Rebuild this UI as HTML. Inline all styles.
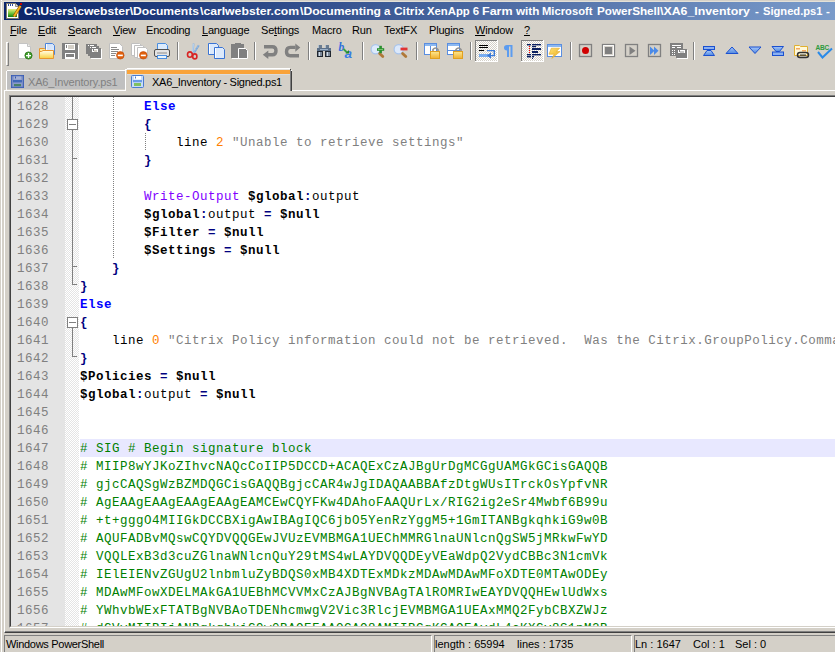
<!DOCTYPE html>
<html><head><meta charset="utf-8"><style>
*{margin:0;padding:0;box-sizing:border-box}
html,body{width:835px;height:652px;overflow:hidden;background:#d4d0c8;position:relative;font-family:"Liberation Sans",sans-serif}
.a{position:absolute}
#title{position:absolute;left:4px;top:2px;width:831px;height:18px;background:linear-gradient(to right,#0a246a 0px,#a6caf0 1157px)}
.tt{position:absolute;top:5px;font:bold 11.5px "Liberation Sans",sans-serif;color:#fff;white-space:pre;transform-origin:0 0}
.mi{position:absolute;top:24px;font:11px "Liberation Sans",sans-serif;color:#000;white-space:pre;letter-spacing:-0.2px}
.mi u{text-decoration:underline;text-underline-offset:1px}
.sep{position:absolute;top:42px;width:2px;height:19px;border-left:1px solid #808080;border-right:1px solid #fff}
.ic{position:absolute;top:43px;width:16px;height:16px}
.tl{position:absolute;left:80px;width:755px;height:18px;padding-left:0px;padding-top:1px;letter-spacing:0.5px;font:12.5px "Liberation Mono",monospace;line-height:18px;white-space:pre;color:#000;overflow:hidden}
.tl.cur{background:#e8e8ff}
.ln{position:absolute;left:11px;width:38px;height:18px;padding-top:1px;text-align:right;letter-spacing:0.5px;font:12.5px "Liberation Mono",monospace;line-height:18px;color:#808080}
.kw{color:#0000ff;font-weight:bold}
.op{color:#000080;font-weight:bold}
.var{color:#000;font-weight:bold}
.cmd{color:#8000ff}
.num{color:#ff8000}
.str{color:#808080}
.cm{color:#008000}
.id{color:#000}
.st{position:absolute;top:638px;font:11px "Liberation Sans",sans-serif;white-space:pre;color:#000;letter-spacing:0px}
</style></head><body>
<!-- window frame -->
<div class="a" style="left:1px;top:0;width:1px;height:652px;background:#fff"></div>
<div class="a" style="left:1px;top:1px;width:834px;height:1px;background:#e4e1d8"></div>

<div id="title"></div>
<div class="tt" style="left:23.6px;transform:scaleX(1.053)">C:\Users\cwebster\Documents</div>
<div class="tt" style="left:199.6px;transform:scaleX(1.062)">\carlwebster.com</div>
<div class="tt" style="left:299.6px;transform:scaleX(1.057)">\Documenting</div>
<div class="tt" style="left:384.0px;transform:scaleX(1.0)">a</div>
<div class="tt" style="left:393.7px;transform:scaleX(1.034)">Citrix</div>
<div class="tt" style="left:426.6px;transform:scaleX(0.984)">XenApp</div>
<div class="tt" style="left:472.7px;transform:scaleX(1.0)">6</div>
<div class="tt" style="left:481.71px;transform:scaleX(1.089)">Farm</div>
<div class="tt" style="left:516.4px;transform:scaleX(1.017)">with</div>
<div class="tt" style="left:541.83px;transform:scaleX(0.975)">Microsoft</div>
<div class="tt" style="left:596.78px;transform:scaleX(1.018)">PowerShell</div>
<div class="tt" style="left:659.5px;transform:scaleX(1.073)">\XA6_Inventory</div>
<div class="tt" style="left:755.1px;transform:scaleX(1.0)">-</div>
<div class="tt" style="left:762.7px;transform:scaleX(0.97)">Signed.ps1</div>
<div class="tt" style="left:826.0px;transform:scaleX(1.0)">-</div>
<div class="mi" style="left:10px"><u>F</u>ile</div>
<div class="mi" style="left:38px"><u>E</u>dit</div>
<div class="mi" style="left:68px"><u>S</u>earch</div>
<div class="mi" style="left:113px"><u>V</u>iew</div>
<div class="mi" style="left:146px">Encoding</div>
<div class="mi" style="left:202px"><u>L</u>anguage</div>
<div class="mi" style="left:261px">Se<u>t</u>tings</div>
<div class="mi" style="left:312px">Macro</div>
<div class="mi" style="left:352px">Run</div>
<div class="mi" style="left:384px">TextFX</div>
<div class="mi" style="left:429px">Plugins</div>
<div class="mi" style="left:475px"><u>W</u>indow</div>
<div class="mi" style="left:524px"><u>?</u></div>
<!-- toolbar grip -->
<div class="a" style="left:6px;top:42px;width:3px;height:24px;border-left:1px solid #fff;border-top:1px solid #fff;border-right:1px solid #808080;border-bottom:1px solid #808080"></div>
<svg class="a" style="left:0;top:0" width="835" height="95" viewBox="0 0 835 95">
<defs>
<linearGradient id="gFold" x1="0" y1="0" x2="0" y2="1"><stop offset="0" stop-color="#fff6c0"/><stop offset="1" stop-color="#f6cf3c"/></linearGradient>
<linearGradient id="gBlueDoc" x1="0" y1="0" x2="1" y2="1"><stop offset="0" stop-color="#c8dcf8"/><stop offset="1" stop-color="#e8f0fc"/></linearGradient>
<linearGradient id="gLock" x1="0" y1="0" x2="0" y2="1"><stop offset="0" stop-color="#fde890"/><stop offset="1" stop-color="#f0b030"/></linearGradient>
<linearGradient id="gTri" x1="0" y1="0" x2="0" y2="1"><stop offset="0" stop-color="#a8c8f8"/><stop offset="1" stop-color="#5088e0"/></linearGradient>
<pattern id="chk" width="2" height="2" patternUnits="userSpaceOnUse"><rect width="2" height="2" fill="#fff"/><rect width="1" height="1" fill="#d4d0c8"/><rect x="1" y="1" width="1" height="1" fill="#d4d0c8"/></pattern>
</defs>
<!-- 1 New -->
<path d="M18.5 43.5H27.5L30.5 46.5V58.5H18.5Z" fill="#fff" stroke="#c4c4c4"/>
<path d="M27.5 43.5V46.5H30.5" fill="#f0f0f0" stroke="#c4c4c4"/>
<circle cx="28.5" cy="55.5" r="3.6" fill="#3c9c28" stroke="#2a7418" stroke-width="0.8"/>
<rect x="26" y="55" width="5" height="1.3" fill="#fff"/><rect x="27.9" y="53" width="1.3" height="5" fill="#fff"/>
<!-- 2 Open -->
<linearGradient id="gFold2" x1="0" y1="0" x2="0" y2="1"><stop offset="0" stop-color="#fffbe8"/><stop offset="0.35" stop-color="#fff0b0"/><stop offset="1" stop-color="#f8d040"/></linearGradient>
<path d="M45.5 43.5H52.5L54.5 45.5V54.5H45.5Z" fill="url(#gBlueDoc)" stroke="#4a84dc"/>
<rect x="46" y="44" width="1" height="10" fill="#fff"/>
<path d="M39.5 52V48.5H44.5L45.5 49.5V52" fill="#fde79a" stroke="#e8962e"/>
<path d="M39.5 51.5H41.5L43 50.5H53.5V58.5H39.5Z" fill="url(#gFold2)" stroke="#e8962e"/>
<!-- 3 Save -->
<rect x="62" y="43" width="16" height="16" fill="#808080"/>
<rect x="65" y="44" width="10" height="6" fill="#fff"/>
<rect x="68" y="45" width="6" height="4" fill="#d4d0c8"/>
<rect x="66" y="45" width="1" height="3" fill="#808080"/>
<rect x="65" y="53" width="10" height="6" fill="#fff"/>
<rect x="66" y="54" width="8" height="3" fill="#808080"/>
<rect x="78" y="45" width="1" height="14" fill="#fff"/>
<!-- 4 Save all -->
<rect x="86" y="44" width="11" height="10" fill="#808080"/>
<rect x="88" y="46" width="11" height="10" fill="#808080" stroke="#fff" stroke-width="0"/>
<rect x="90" y="48" width="11" height="10" fill="#808080"/>
<rect x="88" y="45" width="1" height="1" fill="#fff"/><rect x="90" y="45" width="4" height="1" fill="#fff"/>
<rect x="90" y="47" width="1" height="1" fill="#fff"/><rect x="92" y="47" width="4" height="1" fill="#fff"/>
<rect x="92" y="49" width="6" height="3" fill="#fff"/><rect x="94" y="50" width="3" height="2" fill="#d4d0c8"/><rect x="93" y="49" width="1" height="2" fill="#808080"/>
<rect x="101" y="49" width="1" height="10" fill="#fff"/><rect x="91" y="58" width="11" height="1" fill="#fff"/>
<!-- 5 Close -->
<path d="M109.5 43.5H119.5L122.5 46.5V58.5H109.5Z" fill="#fff" stroke="#c0c0c0"/>
<g fill="#8a8a8a"><rect x="111" y="47" width="6" height="1"/><rect x="111" y="49" width="8" height="1"/><rect x="111" y="51" width="7" height="1"/><rect x="111" y="53" width="5" height="1"/><rect x="111" y="55" width="4" height="1"/></g>
<circle cx="120.3" cy="55.3" r="3.8" fill="#e0600c" stroke="#c04808" stroke-width="0.6"/>
<rect x="117.8" y="54.6" width="5" height="1.6" fill="#fff"/>
<!-- 6 Close all -->
<path d="M131.5 43.5H139.5L141.5 45.5V55.5H131.5Z" fill="#fff" stroke="#c0c0c0"/>
<path d="M134.5 45.5H142.5L144.5 47.5V57.5H134.5Z" fill="#fff" stroke="#c0c0c0"/>
<path d="M137.5 47.5H145.5L147.5 49.5V58.5H137.5Z" fill="#fff" stroke="#c0c0c0"/>
<circle cx="143.3" cy="55.3" r="3.8" fill="#e0600c" stroke="#c04808" stroke-width="0.6"/>
<rect x="140.8" y="54.6" width="5" height="1.6" fill="#fff"/>
<!-- 7 Print -->
<path d="M157.5 43.5H165.5L167.5 45.5V50.5H157.5Z" fill="#dcebfc" stroke="#4a8ee0"/>
<rect x="154.5" y="49.5" width="15" height="7" rx="1.5" fill="#e4e4e4" stroke="#505050"/>
<rect x="157" y="52" width="10" height="2" fill="#b8b8b8"/>
<rect x="157.5" y="55.5" width="9" height="3" fill="#e8f4fc" stroke="#4a8ee0"/>
<!-- separators -->
<g fill="#808080"><rect x="177" y="42" width="1" height="18"/><rect x="254" y="42" width="1" height="18"/><rect x="308" y="42" width="1" height="18"/><rect x="362" y="42" width="1" height="18"/><rect x="416" y="42" width="1" height="18"/><rect x="470" y="42" width="1" height="18"/><rect x="570" y="42" width="1" height="18"/><rect x="693" y="42" width="1" height="18"/></g>
<g fill="#ffffff"><rect x="178" y="42" width="1" height="18"/><rect x="255" y="42" width="1" height="18"/><rect x="309" y="42" width="1" height="18"/><rect x="363" y="42" width="1" height="18"/><rect x="417" y="42" width="1" height="18"/><rect x="471" y="42" width="1" height="18"/><rect x="571" y="42" width="1" height="18"/><rect x="694" y="42" width="1" height="18"/></g>
<!-- 8 Cut -->
<path d="M193.6 43.5L192.6 54.5" stroke="#8cb4e0" stroke-width="1.8" fill="none"/>
<path d="M193.3 44L192.6 53" stroke="#e8f2fc" stroke-width="0.6" fill="none"/>
<path d="M198.8 45.3L194.2 52.5" stroke="#7aa6d8" stroke-width="2" fill="none"/>
<path d="M198.3 45.6L194.6 51.4" stroke="#e0ecfa" stroke-width="0.6" fill="none" stroke-dasharray="1 1"/>
<ellipse cx="189.9" cy="54.6" rx="2.4" ry="2.7" fill="none" stroke="#d82424" stroke-width="1.6"/>
<ellipse cx="194.8" cy="56.4" rx="2.1" ry="2.5" fill="none" stroke="#d82424" stroke-width="1.6"/>
<!-- 9 Copy -->
<path d="M208.5 43.5H216.5L218.5 45.5V54.5H208.5Z" fill="#dce9fb" stroke="#3a74d4"/>
<path d="M214.5 47.5H222.5L224.5 49.5V58.5H214.5Z" fill="#dce9fb" stroke="#3a74d4"/>
<rect x="215" y="48" width="1" height="10" fill="#fff"/><rect x="209" y="44" width="1" height="10" fill="#fff"/>
<!-- 10 Paste -->
<rect x="231" y="44" width="13" height="14" fill="#808080"/>
<rect x="235" y="43" width="6" height="2" fill="#808080"/>
<path d="M238.5 48.5H245.5L247.5 50.5V58.5H238.5Z" fill="#808080" stroke="#fff"/>
<rect x="232" y="58" width="7" height="1" fill="#fff"/>
<!-- 11 Undo -->
<path d="M264 46.8H272.3Q276 46.8 276 50.7Q276 54.8 272.3 54.8H267.5" fill="none" stroke="#808080" stroke-width="3.4"/>
<path d="M262.8 54.8L268.3 50.6V59Z" fill="#808080"/>
<!-- 12 Redo -->
<path d="M299 55.8H290.2Q286.5 55.8 286.5 51.8Q286.5 47.4 290.2 47.4H295.5" fill="none" stroke="#808080" stroke-width="3.4"/>
<path d="M300.3 47.6L295.3 43.6V51.8Z" fill="#808080"/>
<!-- 13 Find -->
<!-- 13 Find -->
<rect x="318" y="45" width="4" height="4" fill="#6a7c90"/><rect x="325" y="45" width="4" height="4" fill="#6a7c90"/>
<rect x="318" y="45" width="1" height="4" fill="#b0c0d0"/><rect x="325" y="45" width="1" height="4" fill="#b0c0d0"/>
<rect x="317" y="48" width="14" height="3" fill="#5c7088"/>
<rect x="320" y="49" width="8" height="1" fill="#9ab0c8"/>
<rect x="317" y="51" width="6" height="6" fill="#20262e"/><rect x="325" y="51" width="6" height="6" fill="#20262e"/>
<rect x="318" y="52" width="4" height="4" fill="#7c8898"/><rect x="326" y="52" width="4" height="4" fill="#7c8898"/>
<rect x="319" y="52" width="1" height="4" fill="#d0dce8"/><rect x="327" y="52" width="1" height="4" fill="#d0dce8"/>
<!-- 14 Replace -->
<text x="338.5" y="50.5" font-family="Liberation Serif" font-style="italic" font-weight="bold" font-size="11.5" fill="#2f6fdc">b</text>
<text x="344.5" y="58" font-family="Liberation Sans" font-style="italic" font-weight="bold" font-size="13.5" fill="#3a7ce6">a</text>
<path d="M343.5 49L347 52.5" stroke="#3aa040" stroke-width="1.8" fill="none"/>
<path d="M345.5 53.5H349V50Z" fill="#238a2a"/>
<!-- 15 Zoom in -->
<circle cx="375.7" cy="49.3" r="4.6" fill="#dce9fb" stroke="#a8c4ec" stroke-width="1.2"/>
<path d="M379.6 53.4L382.8 56.6" stroke="#b07838" stroke-width="2.8" stroke-linecap="round"/>
<rect x="377" y="48.2" width="7.2" height="2.6" fill="#2a9030"/><rect x="379.3" y="45.8" width="2.6" height="7.4" fill="#2a9030"/>
<rect x="378" y="49.2" width="5" height="0.8" fill="#8ad080"/>
<!-- 16 Zoom out -->
<circle cx="398.7" cy="49.3" r="4.6" fill="#dce9fb" stroke="#a8c4ec" stroke-width="1.2"/>
<path d="M402.6 53.4L405.8 56.6" stroke="#b07838" stroke-width="2.8" stroke-linecap="round"/>
<rect x="400.5" y="47.6" width="7" height="2.8" fill="#e03434"/>
<!-- 17 Sync V -->
<rect x="424.5" y="43.5" width="12" height="11" fill="#fff" stroke="#5a8ee0"/>
<rect x="425" y="44" width="11" height="2" fill="#8cb8f0"/><rect x="430" y="46" width="1" height="9" fill="#5a8ee0"/>
<path d="M433 51V49.5Q435.5 46.5 438 49.5V51" fill="none" stroke="#909090" stroke-width="1.6"/>
<rect x="430.5" y="51.5" width="9" height="7" fill="url(#gLock)" stroke="#e0a020"/>
<!-- 18 Sync H -->
<rect x="447.5" y="43.5" width="12" height="11" fill="#fff" stroke="#5a8ee0"/>
<rect x="448" y="44" width="11" height="2" fill="#8cb8f0"/><rect x="448" y="50" width="11" height="1" fill="#5a8ee0"/>
<path d="M456 51V49.5Q458.5 46.5 461 49.5V51" fill="none" stroke="#909090" stroke-width="1.6"/>
<rect x="453.5" y="51.5" width="9" height="7" fill="url(#gLock)" stroke="#e0a020"/>
<!-- 19 Wrap pressed -->
<rect x="475" y="40" width="23" height="22" fill="url(#chk)"/>
<rect x="475" y="40" width="22" height="1" fill="#808080"/><rect x="475" y="40" width="1" height="22" fill="#808080"/>
<rect x="497" y="40" width="1" height="22" fill="#fff"/><rect x="475" y="61" width="23" height="1" fill="#fff"/>
<rect x="479" y="45" width="9" height="1" fill="#000"/><rect x="479" y="47" width="9" height="1" fill="#000"/><rect x="479" y="50" width="5" height="1" fill="#000"/>
<rect x="479" y="54" width="10" height="3" fill="#78acf0"/>
<path d="M487 50.6H494.3V55.6H490" fill="none" stroke="#3a7ad8" stroke-width="1.4"/>
<path d="M491 52.5L487 55.6L491 58.7Z" fill="#3a7ad8"/>
<!-- 20 Pilcrow -->
<path d="M507 45H512.5V57H510.5V46.5H509V57H507V50.5Q504 50.5 504 47.8Q504 45 507 45Z" fill="#5c9cf0"/>
<!-- 21 Indent guide pressed -->
<rect x="521" y="40" width="23" height="22" fill="url(#chk)"/>
<rect x="521" y="40" width="22" height="1" fill="#808080"/><rect x="521" y="40" width="1" height="22" fill="#808080"/>
<rect x="543" y="40" width="1" height="22" fill="#fff"/><rect x="521" y="61" width="23" height="1" fill="#fff"/>
<g fill="#0a2060"><rect x="527" y="44" width="4" height="1.4"/><rect x="532" y="44" width="9" height="1.4"/><rect x="532" y="46" width="4" height="1.2"/><rect x="532" y="48" width="9" height="2"/><rect x="532" y="51" width="6" height="2"/><rect x="527" y="54" width="4" height="1.4"/><rect x="532" y="54" width="9" height="1.4"/><rect x="527" y="56" width="4" height="1.4"/><rect x="532" y="56" width="2" height="1.4"/><rect x="532" y="58" width="1" height="1"/></g>
<g fill="#ff0000"><rect x="529" y="46" width="1" height="1"/><rect x="529" y="48" width="1" height="1"/><rect x="529" y="50" width="1" height="1"/><rect x="529" y="52" width="1" height="1"/></g>
<!-- 22 Lightning -->
<linearGradient id="gBolt" x1="0" y1="0" x2="1" y2="1"><stop offset="0" stop-color="#fde070"/><stop offset="1" stop-color="#eeb020"/></linearGradient>
<rect x="547.5" y="44.5" width="14" height="12" fill="#fff" stroke="#5a8ee0"/>
<rect x="548" y="45" width="13" height="2" fill="#8cb8f0"/>
<path d="M551.3 48.2H559.6L556.4 51.6H560L551.8 58.4L554.2 54.2H549Z" fill="url(#gBolt)" stroke="#e0a828" stroke-width="0.6"/>
<!-- 23-26 Macro boxes -->
<rect x="579.5" y="44.5" width="12" height="12" fill="none" stroke="#808080" stroke-width="1.3"/>
<circle cx="585.5" cy="50.5" r="3.5" fill="#d00000"/>
<rect x="602.5" y="44.5" width="12" height="12" fill="none" stroke="#808080" stroke-width="1.3"/>
<rect x="603.6" y="45.6" width="9.8" height="9.8" fill="none" stroke="#fff" stroke-width="1"/>
<rect x="605" y="47" width="7" height="7" fill="#808080"/>
<rect x="625.5" y="44.5" width="12" height="12" fill="none" stroke="#808080" stroke-width="1.3"/>
<path d="M629.5 46.5V55L635.5 50.7Z" fill="#808080"/>
<rect x="648.5" y="44.5" width="12" height="12" fill="none" stroke="#808080" stroke-width="1.3"/>
<path d="M650 46.5V55L654.5 50.7Z M654 46.5V55L658.5 50.7Z" fill="#4a8ae8"/>
<!-- 27 Save macro -->
<rect x="670" y="43" width="13" height="13" fill="#808080"/>
<rect x="672" y="45" width="9" height="1" fill="#fff"/><rect x="672" y="47" width="3" height="1" fill="#fff"/><rect x="677" y="47" width="4" height="1" fill="#fff"/>
<g fill="#fff"><rect x="672" y="50" width="1" height="1"/><rect x="674" y="50" width="1" height="1"/><rect x="672" y="52" width="1" height="1"/><rect x="674" y="52" width="1" height="1"/><rect x="672" y="54" width="1" height="1"/><rect x="674" y="54" width="1" height="1"/></g>
<rect x="676" y="49" width="11" height="9" fill="#808080" stroke="#fff" stroke-width="0"/>
<rect x="678" y="50" width="7" height="3" fill="#fff"/><rect x="680" y="51" width="4" height="2" fill="#c8c8c8"/><rect x="679" y="50" width="1" height="2" fill="#808080"/>
<rect x="687" y="50" width="1" height="9" fill="#fff"/><rect x="677" y="58" width="11" height="1" fill="#fff"/>
<!-- 28 Hourglass1 -->
<rect x="703.5" y="46.5" width="11" height="3" fill="#8ab0f0" stroke="#1a50d0"/>
<path d="M707 50.5H711L714.5 55.5H703.5Z" fill="url(#gTri)" stroke="#1a50d0"/>
<!-- 29 Up -->
<path d="M732 47L738 53.5H726Z" fill="url(#gTri)" stroke="#1a50d0" stroke-width="1"/>
<!-- 30 Down -->
<path d="M755 53.5L761 47H749Z" fill="url(#gTri)" stroke="#1a50d0" stroke-width="1"/>
<!-- 31 Hourglass2 -->
<path d="M772 46.5H783.5L779.5 51.5H776Z" fill="url(#gTri)" stroke="#1a50d0"/>
<rect x="772.5" y="52" width="11" height="3.5" fill="#8ab0f0" stroke="#1a50d0"/>
<!-- 32 Folder chain -->
<path d="M794.5 45.5H799.5L800.5 46.5H807.5V55.5H794.5Z" fill="#fff8d8" stroke="#e0b030"/>
<rect x="796" y="48" width="4" height="1.5" fill="#f4a860"/><rect x="802" y="50" width="4" height="1.5" fill="#f4a860"/>
<rect x="797.5" y="52.5" width="11" height="5" rx="2.5" fill="none" stroke="#303030" stroke-width="1.5"/>
<rect x="800" y="54.5" width="6" height="1.2" fill="#303030"/>
<!-- 33 ABC check -->
<text x="815.5" y="49.8" font-family="Liberation Sans" font-weight="bold" font-size="6.5" fill="#2c9a3c" letter-spacing="-0.2">ABC</text>
<path d="M818 52L822.5 57.5L832 48.5" fill="none" stroke="#2a8ae8" stroke-width="2"/>
<!-- App icon -->
<linearGradient id="gApp" x1="0" y1="0" x2="0" y2="1"><stop offset="0" stop-color="#e8f080"/><stop offset="0.5" stop-color="#78c840"/><stop offset="1" stop-color="#108010"/></linearGradient>
<path d="M6.5 3.5H15.5L18.5 6.5V18.5H6.5Z" fill="#fff" stroke="#7c7868"/>
<path d="M15.5 3.5V6.5H18.5" fill="#d8d8d8" stroke="#7c7868" stroke-width="0.8"/>
<rect x="8" y="9" width="9" height="8" fill="url(#gApp)"/>
<g fill="#3050a0"><rect x="8" y="4" width="1" height="2"/><rect x="10" y="4" width="1" height="2"/><rect x="12" y="4" width="1" height="2"/></g>
<path d="M14 16.5L20.5 6" stroke="#905000" stroke-width="3"/>
<path d="M14 16.5L20.5 6" stroke="#f8b820" stroke-width="1.8"/>
<rect x="20" y="3" width="2" height="2" fill="#c00000"/>
</svg>

<!-- tab control -->
<div class="a" style="left:4px;top:90px;width:831px;height:543px;border-left:1px solid #fff;border-top:1px solid #fff;border-bottom:1px solid #404040"></div>
<div class="a" style="left:5px;top:631px;width:830px;height:1px;background:#808080"></div>
<!-- inactive tab -->
<div class="a" style="left:7px;top:71px;width:118px;height:18px;background:#c0c0c0"></div>
<div class="a" style="left:7px;top:70px;width:118px;height:1px;background:#fff"></div>
<div class="a" style="left:6px;top:71px;width:1px;height:19px;background:#fff"></div>
<div class="a" style="left:125px;top:71px;width:1px;height:19px;background:#fff"></div>
<div class="a" style="left:28px;top:76px;font:11px 'Liberation Sans',sans-serif;color:#808080;white-space:pre;letter-spacing:-0.15px">XA6_Inventory.ps1</div>
<!-- active tab -->
<div class="a" style="left:126px;top:69px;width:164px;height:22px;background:#d4d0c8"></div>
<div class="a" style="left:125px;top:69px;width:1px;height:22px;background:#fff"></div>
<div class="a" style="left:126px;top:69px;width:1px;height:1px;background:#fff"></div>
<div class="a" style="left:127px;top:68px;width:163px;height:1px;background:#fff"></div>
<div class="a" style="left:127px;top:69px;width:163px;height:1px;background:#e6e4e0"></div>
<div class="a" style="left:127px;top:70px;width:163px;height:4px;background:#f9a33a"></div>
<div class="a" style="left:127px;top:74px;width:163px;height:1px;background:#dcdcdc"></div>
<div class="a" style="left:290px;top:69px;width:1px;height:1px;background:#404040"></div>
<div class="a" style="left:291px;top:70px;width:1px;height:1px;background:#fff"></div>
<div class="a" style="left:290px;top:70px;width:1px;height:21px;background:#808080"></div>
<div class="a" style="left:291px;top:71px;width:1px;height:20px;background:#404040"></div>
<div class="a" style="left:152px;top:76px;font:11px 'Liberation Sans',sans-serif;color:#000;white-space:pre;letter-spacing:-0.27px">XA6_Inventory - Signed.ps1</div>
<svg class="a" style="left:0;top:0" width="200" height="95" viewBox="0 0 200 95">
<!-- Tab icons -->
<rect x="11.5" y="75.5" width="12" height="12" fill="#8a9ac8" stroke="#3458b0"/>
<rect x="12" y="76" width="11" height="11" fill="none" stroke="#5a78c0" stroke-width="0.8"/>
<rect x="14" y="76.5" width="7" height="3" fill="#a4b0d4"/><rect x="15" y="76.5" width="1" height="2" fill="#3458b0"/>
<rect x="13" y="80" width="9" height="2.4" fill="#4068b8"/>
<rect x="14" y="84" width="7" height="2.2" fill="#4a8068"/>
<rect x="131.5" y="75.5" width="12" height="12" rx="1" fill="#c8dcf8" stroke="#4a7cd0"/>
<rect x="134" y="76" width="7" height="3.5" fill="#fff"/><rect x="135" y="76.5" width="1" height="2" fill="#4a7cd0"/>
<rect x="133" y="80" width="9" height="2.2" fill="#6a9ce8"/>
<rect x="134" y="83" width="7" height="3" fill="#80c060"/>
</svg>

<!-- editor -->
<div class="a" style="left:9px;top:95px;width:826px;height:533px;border-left:1px solid #808080;border-top:1px solid #808080;border-bottom:1px solid #fff"></div>
<div class="a" style="left:10px;top:96px;width:825px;height:531px;border-left:1px solid #404040;border-top:1px solid #404040;border-bottom:1px solid #d4d0c8"></div>
<div class="a" style="left:11px;top:97px;width:824px;height:529px;background:#fff;overflow:hidden" id="ed">
</div>
<div class="a" style="left:11px;top:97px;width:54px;height:529px;background:#e4e4e4"></div>
<div class="a" style="left:65px;top:97px;width:14px;height:529px;background:repeating-conic-gradient(#e4e4e4 0 25%,#fff 0 50%) 0 0/2px 2px"></div>
<div style="position:absolute;left:0;top:0;width:835px;height:626px;overflow:hidden">
<div class="ln" style="top:97px">1628</div>
<div class="tl" style="top:97px">        <span class="kw">Else</span></div>
<div class="ln" style="top:115px">1629</div>
<div class="tl" style="top:115px">        <span class="op">{</span></div>
<div class="ln" style="top:133px">1630</div>
<div class="tl" style="top:133px">            <span class="id">line </span><span class="num">2</span><span class="id"> </span><span class="str">&quot;Unable to retrieve settings&quot;</span></div>
<div class="ln" style="top:151px">1631</div>
<div class="tl" style="top:151px">        <span class="op">}</span></div>
<div class="ln" style="top:169px">1632</div>
<div class="tl" style="top:169px"></div>
<div class="ln" style="top:187px">1633</div>
<div class="tl" style="top:187px">        <span class="cmd">Write-Output</span><span class="id"> </span><span class="var">$global</span><span class="op">:</span><span class="id">output</span></div>
<div class="ln" style="top:205px">1634</div>
<div class="tl" style="top:205px">        <span class="var">$global</span><span class="op">:</span><span class="id">output </span><span class="op">=</span><span class="id"> </span><span class="var">$null</span></div>
<div class="ln" style="top:223px">1635</div>
<div class="tl" style="top:223px">        <span class="var">$Filter</span><span class="id"> </span><span class="op">=</span><span class="id"> </span><span class="var">$null</span></div>
<div class="ln" style="top:241px">1636</div>
<div class="tl" style="top:241px">        <span class="var">$Settings</span><span class="id"> </span><span class="op">=</span><span class="id"> </span><span class="var">$null</span></div>
<div class="ln" style="top:259px">1637</div>
<div class="tl" style="top:259px">    <span class="op">}</span></div>
<div class="ln" style="top:277px">1638</div>
<div class="tl" style="top:277px"><span class="op">}</span></div>
<div class="ln" style="top:295px">1639</div>
<div class="tl" style="top:295px"><span class="kw">Else</span></div>
<div class="ln" style="top:313px">1640</div>
<div class="tl" style="top:313px"><span class="op">{</span></div>
<div class="ln" style="top:331px">1641</div>
<div class="tl" style="top:331px">    <span class="id">line </span><span class="num">0</span><span class="id"> </span><span class="str">&quot;Citrix Policy information could not be retrieved.  Was the Citrix.GroupPolicy.Commands snapin loaded?&quot;</span></div>
<div class="ln" style="top:349px">1642</div>
<div class="tl" style="top:349px"><span class="op">}</span></div>
<div class="ln" style="top:367px">1643</div>
<div class="tl" style="top:367px"><span class="var">$Policies</span><span class="id"> </span><span class="op">=</span><span class="id"> </span><span class="var">$null</span></div>
<div class="ln" style="top:385px">1644</div>
<div class="tl" style="top:385px"><span class="var">$global</span><span class="op">:</span><span class="id">output </span><span class="op">=</span><span class="id"> </span><span class="var">$null</span></div>
<div class="ln" style="top:403px">1645</div>
<div class="tl" style="top:403px"></div>
<div class="ln" style="top:421px">1646</div>
<div class="tl" style="top:421px"></div>
<div class="ln" style="top:439px">1647</div>
<div class="tl cur" style="top:439px"><span class="cm"># SIG # Begin signature block</span></div>
<div class="ln" style="top:457px">1648</div>
<div class="tl" style="top:457px"><span class="cm"># MIIP8wYJKoZIhvcNAQcCoIIP5DCCD+ACAQExCzAJBgUrDgMCGgUAMGkGCisGAQQB</span></div>
<div class="ln" style="top:475px">1649</div>
<div class="tl" style="top:475px"><span class="cm"># gjcCAQSgWzBZMDQGCisGAQQBgjcCAR4wJgIDAQAABBAfzDtgWUsITrckOsYpfvNR</span></div>
<div class="ln" style="top:493px">1650</div>
<div class="tl" style="top:493px"><span class="cm"># AgEAAgEAAgEAAgEAAgEAMCEwCQYFKw4DAhoFAAQUrLx/RIG2ig2eSr4Mwbf6B99u</span></div>
<div class="ln" style="top:511px">1651</div>
<div class="tl" style="top:511px"><span class="cm"># +t+gggO4MIIGkDCCBXigAwIBAgIQC6jbO5YenRzYggM5+1GmITANBgkqhkiG9w0B</span></div>
<div class="ln" style="top:529px">1652</div>
<div class="tl" style="top:529px"><span class="cm"># AQUFADBvMQswCQYDVQQGEwJVUzEVMBMGA1UEChMMRGlnaUNlcnQgSW5jMRkwFwYD</span></div>
<div class="ln" style="top:547px">1653</div>
<div class="tl" style="top:547px"><span class="cm"># VQQLExB3d3cuZGlnaWNlcnQuY29tMS4wLAYDVQQDEyVEaWdpQ2VydCBBc3N1cmVk</span></div>
<div class="ln" style="top:565px">1654</div>
<div class="tl" style="top:565px"><span class="cm"># IElEIENvZGUgU2lnbmluZyBDQS0xMB4XDTExMDkzMDAwMDAwMFoXDTE0MTAwODEy</span></div>
<div class="ln" style="top:583px">1655</div>
<div class="tl" style="top:583px"><span class="cm"># MDAwMFowXDELMAkGA1UEBhMCVVMxCzAJBgNVBAgTAlROMRIwEAYDVQQHEwlUdWxs</span></div>
<div class="ln" style="top:601px">1656</div>
<div class="tl" style="top:601px"><span class="cm"># YWhvbWExFTATBgNVBAoTDENhcmwgV2Vic3RlcjEVMBMGA1UEAxMMQ2FybCBXZWJz</span></div>
<div class="ln" style="top:619px">1657</div>
<div class="tl" style="top:619px"><span class="cm"># dGVyMIIBIjANBgkqhkiG9w0BAQEFAAOCAQ8AMIIBCgKCAQEAvdL4cKXGv8S1pM2B</span></div>
</div>
<!-- fold markers -->
<div class="a" style="left:72px;top:97px;width:1px;height:188px;background:#808080"></div>
<div class="a" style="left:67px;top:119px;width:11px;height:11px;border:1px solid #808080;background:#fff"></div>
<div class="a" style="left:69px;top:124px;width:7px;height:1px;background:#808080"></div>
<div class="a" style="left:72px;top:158px;width:5px;height:1px;background:#808080"></div>
<div class="a" style="left:72px;top:266px;width:5px;height:1px;background:#808080"></div>
<div class="a" style="left:72px;top:284px;width:5px;height:1px;background:#808080"></div>
<div class="a" style="left:67px;top:317px;width:11px;height:11px;border:1px solid #808080;background:#fff"></div>
<div class="a" style="left:69px;top:322px;width:7px;height:1px;background:#808080"></div>
<div class="a" style="left:72px;top:328px;width:1px;height:29px;background:#808080"></div>
<div class="a" style="left:72px;top:356px;width:5px;height:1px;background:#808080"></div>
<!-- indent guides -->
<div class="a" style="left:113px;top:97px;width:1px;height:162px;background-image:linear-gradient(#808080 50%,transparent 50%);background-size:1px 2px"></div>
<div class="a" style="left:145px;top:133px;width:1px;height:18px;background-image:linear-gradient(#808080 50%,transparent 50%);background-size:1px 2px"></div>
<div class="a" style="left:81px;top:349px;width:1px;height:0px"></div>
<!-- status bar -->
<div class="a" style="left:4px;top:635px;width:428px;height:17px;border-left:1px solid #808080;border-top:1px solid #808080;border-right:1px solid #fff"></div>
<div class="a" style="left:434px;top:635px;width:198px;height:17px;border-left:1px solid #808080;border-top:1px solid #808080;border-right:1px solid #fff"></div>
<div class="a" style="left:634px;top:635px;width:201px;height:17px;border-left:1px solid #808080;border-top:1px solid #808080"></div>
<div class="st" style="left:6px;letter-spacing:-0.3px">Windows PowerShell</div>
<div class="st" style="left:435px">length : 65994</div>
<div class="st" style="left:517px">lines : 1735</div>
<div class="st" style="left:635px">Ln : 1647</div>
<div class="st" style="left:693px">Col : 1</div>
<div class="st" style="left:735px">Sel : 0</div>
</body></html>
